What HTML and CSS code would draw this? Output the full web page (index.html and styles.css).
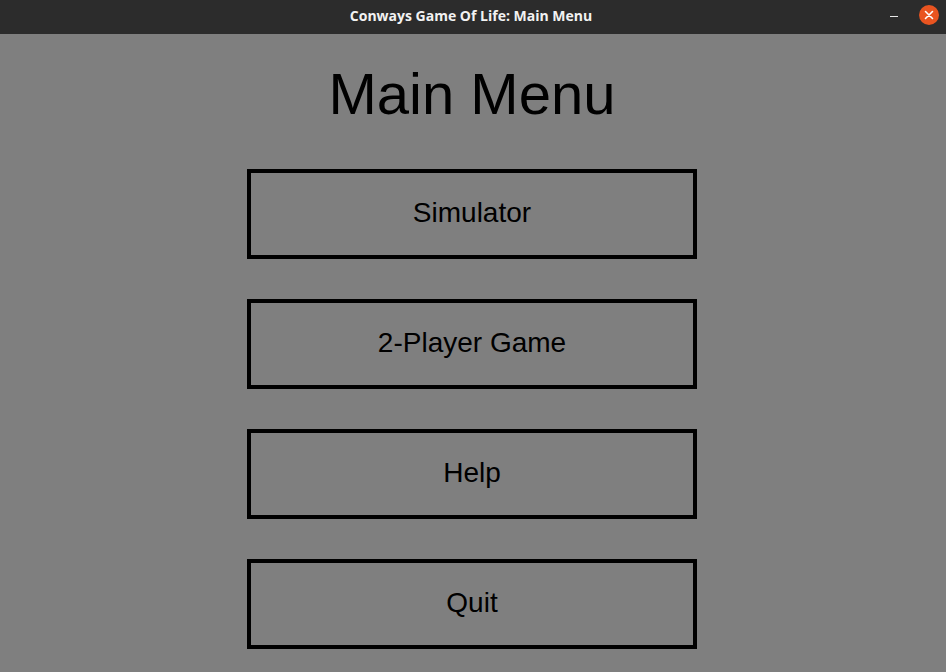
FILE: index.html
```html
<!DOCTYPE html>
<html>
<head>
<meta charset="utf-8">
<link rel="stylesheet" href="styles.css">
</head>
<body>
<div class="window">
  <header class="titlebar">
    <span class="title">Conways Game Of Life: Main Menu</span>
    <div class="controls">
      <span class="minimize"></span>
      <span class="close">
        <svg width="10" height="10" viewBox="0 0 10 10"><path d="M1.5 1.5 L8.5 8.5 M8.5 1.5 L1.5 8.5" stroke="#fff" stroke-width="1.6" stroke-linecap="round"/></svg>
      </span>
    </div>
  </header>
  <main class="content">
    <h1 class="heading">Main Menu</h1>
    <nav class="menu">
      <div class="menu-button">Simulator</div>
      <div class="menu-button">2-Player Game</div>
      <div class="menu-button">Help</div>
      <div class="menu-button">Quit</div>
    </nav>
  </main>
</div>
</body>
</html>
```
FILE: styles.css
```css
html, body {
  margin: 0;
  padding: 0;
}
body {
  width: 946px;
  height: 672px;
  overflow: hidden;
  background: #7f7f7f;
  font-family: "Liberation Sans", Arial, sans-serif;
}
.window {
  display: flex;
  flex-direction: column;
  height: 672px;
}
.titlebar {
  position: relative;
  height: 34px;
  flex: 0 0 34px;
  background: #2c2c2c;
  display: flex;
  align-items: center;
  justify-content: center;
}
.title {
  color: #f2f2f2;
  font-family: "Open Sans", "DejaVu Sans", sans-serif;
  font-weight: 700;
  font-size: 14px;
  letter-spacing: 0;
  margin-top: -3px;
  margin-right: 4px;
}
.controls {
  position: absolute;
  right: 7px;
  top: 5px;
  display: flex;
  align-items: center;
  gap: 21px;
}
.minimize {
  width: 8px;
  height: 1px;
  background: #e8e8e8;
  margin-top: 2px;
}
.close {
  width: 20px;
  height: 20px;
  border-radius: 50%;
  background: #e95420;
  display: flex;
  align-items: center;
  justify-content: center;
}
.close svg {
  display: block;
}
.content {
  display: flex;
  flex-direction: column;
  align-items: center;
}
.heading {
  margin: 30px 0 0 0;
  font-weight: 400;
  font-size: 58px;
  line-height: 60px;
  color: #000;
  padding-right: 2px;
}
.menu {
  margin-top: 45px;
  margin-right: 2px;
  display: flex;
  flex-direction: column;
  gap: 40px;
}
.menu-button {
  box-sizing: border-box;
  width: 450px;
  height: 90px;
  border: 4px solid #000;
  display: flex;
  align-items: center;
  justify-content: center;
  font-size: 28px;
  color: #000;
  padding-bottom: 2px;
}
```
